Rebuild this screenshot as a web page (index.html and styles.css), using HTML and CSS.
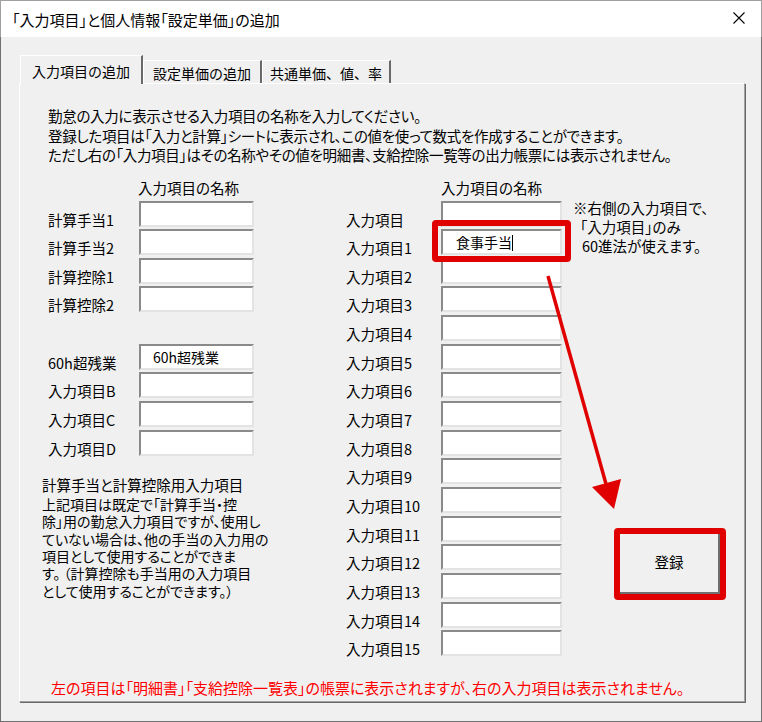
FILE: index.html
```html
<!DOCTYPE html>
<html lang="ja">
<head>
<meta charset="UTF-8">
<title>「入力項目」と個人情報「設定単価」の追加</title>
<link rel="stylesheet" href="styles.css">
</head>
<body>

<div class="window">
  <!-- タイトルバー -->
  <div class="titlebar">
    <span class="title">「入力項目」と個人情報「設定単価」の追加</span>
    <svg class="close" width="12" height="12" viewBox="0 0 12 12">
      <path d="M0.5 0.5 L11.5 11.5 M11.5 0.5 L0.5 11.5" stroke="#000" stroke-width="1.1" fill="none"/>
    </svg>
  </div>

  <div class="client">
    <div class="tabs">
      <div class="tab active">入力項目の追加</div>
      <div class="tab">設定単価の追加</div>
      <div class="tab wide">共通単価、値、率</div>
    </div>

    <div class="panel">
      <div class="intro">
        <p>勤怠の入力に表示させる入力項目の名称を入力してください。</p>
        <p>登録した項目は「入力と計算」シートに表示され、この値を使って数式を作成することができます。</p>
        <p>ただし右の「入力項目」はその名称やその値を明細書、支給控除一覧等の出力帳票には表示されません。</p>
      </div>

      <div class="form">
        <!-- 左側 -->
        <div class="col-left">
          <div class="col-head">入力項目の名称</div>
          <div class="row"><span class="lbl">計算手当1</span><div class="box"></div></div>
          <div class="row"><span class="lbl">計算手当2</span><div class="box"></div></div>
          <div class="row"><span class="lbl">計算控除1</span><div class="box"></div></div>
          <div class="row"><span class="lbl">計算控除2</span><div class="box"></div></div>
          <div class="row-gap"></div>
          <div class="row"><span class="lbl">60h超残業</span><div class="box">60h超残業</div></div>
          <div class="row"><span class="lbl">入力項目B</span><div class="box"></div></div>
          <div class="row"><span class="lbl">入力項目C</span><div class="box"></div></div>
          <div class="row"><span class="lbl">入力項目D</span><div class="box"></div></div>

          <div class="desc">
            <div class="desc-title">計算手当と計算控除用入力項目</div>
            <div class="desc-body">
              <div class="ln">上記項目は既定で「計算手当・控</div>
              <div class="ln">除」用の勤怠入力項目ですが、使用し</div>
              <div class="ln">ていない場合は、他の手当の入力用の</div>
              <div class="ln">項目として使用することができま</div>
              <div class="ln">す。 （計算控除も手当用の入力項目</div>
              <div class="ln">として使用することができます。）</div>
            </div>
          </div>
        </div>

        <!-- 右側 -->
        <div class="col-right">
          <div class="col-head">入力項目の名称</div>
          <div class="row"><span class="lbl">入力項目</span><div class="box"></div></div>
          <div class="row"><span class="lbl">入力項目1</span><div class="box marked">食事手当<span class="caret"></span></div></div>
          <div class="row"><span class="lbl">入力項目2</span><div class="box"></div></div>
          <div class="row"><span class="lbl">入力項目3</span><div class="box"></div></div>
          <div class="row"><span class="lbl">入力項目4</span><div class="box"></div></div>
          <div class="row"><span class="lbl">入力項目5</span><div class="box"></div></div>
          <div class="row"><span class="lbl">入力項目6</span><div class="box"></div></div>
          <div class="row"><span class="lbl">入力項目7</span><div class="box"></div></div>
          <div class="row"><span class="lbl">入力項目8</span><div class="box"></div></div>
          <div class="row"><span class="lbl">入力項目9</span><div class="box"></div></div>
          <div class="row"><span class="lbl">入力項目10</span><div class="box"></div></div>
          <div class="row"><span class="lbl">入力項目11</span><div class="box"></div></div>
          <div class="row"><span class="lbl">入力項目12</span><div class="box"></div></div>
          <div class="row"><span class="lbl">入力項目13</span><div class="box"></div></div>
          <div class="row"><span class="lbl">入力項目14</span><div class="box"></div></div>
          <div class="row"><span class="lbl">入力項目15</span><div class="box"></div></div>
        </div>

        <div class="col-side">
          <div class="note">
            <div>※右側の入力項目で、</div>
            <div class="indent">「入力項目」のみ</div>
            <div class="indent2">60進法が使えます。</div>
          </div>
          <div class="btn-frame"><div class="btn">登録</div></div>
        </div>
      </div>

      <p class="footnote">左の項目は「明細書」「支給控除一覧表」の帳票に表示されますが、右の入力項目は表示されません。</p>
    </div>
  </div>

  <!-- 赤い矢印（注記） -->
  <svg class="arrow" width="762" height="722" viewBox="0 0 762 722">
    <line x1="548" y1="276" x2="606" y2="484" stroke="#e00000" stroke-width="3.5"/>
    <polygon points="614,509 621,479 592,487" fill="#e00000"/>
  </svg>
</div>

</body>
</html>
```

FILE: styles.css
```css
* {
  margin: 0;
  padding: 0;
  box-sizing: border-box;
}

body {
  background: #fff;
  font-family: "Noto Sans CJK JP", sans-serif;
  color: #000;
}

/* ウィンドウ */
.window {
  position: relative;
  width: 762px;
  height: 722px;
  background: #f0f0f0;
  box-shadow: inset 1px 0 #707070, inset -1px 0 #707070, inset 0 -1px #707070;
  font-size: 14.5px;
  font-feature-settings: "palt";
}

.titlebar {
  height: 37px;
  background: #fff;
  display: flex;
  align-items: center;
  justify-content: space-between;
  padding: 2px 16px 0 11px;
  border-top: 1px solid #a0a0a0;
  border-left: 1px solid #a0a0a0;
  border-right: 1px solid #a0a0a0;
}
.title {
  font-size: 15px;
  line-height: 20px;
}
.close {
  display: block;
  margin-top: -4px;
}

.client {
  padding: 18px 0 0 19px;
}

/* タブ */
.tabs {
  display: flex;
  align-items: flex-end;
  height: 28px;
  padding-left: 1px;
}
.tab {
  position: relative;
  height: 23px;
  width: 119px;
  text-align: center;
  font-size: 14px;
  line-height: 22px;
  padding-top: 1px;
  background: #f0f0f0;
  border-top: 1px solid #fff;
  border-left: 1px solid #fff;
  border-right: 2px solid #696969;
  font-feature-settings: normal;
}
.tab.wide {
  width: 129px;
}
.tab.active {
  width: 123px;
  height: 29px;
  margin-bottom: -1px;
  padding-top: 4px;
  z-index: 1;
}

/* パネル */
.panel {
  width: 726px;
  height: 619px;
  border: 1px solid;
  border-color: #fff #a0a0a0 #a0a0a0 #fff;
  box-shadow: 1px 1px 0 #696969;
  padding: 22px 0 0 28px;
}

.intro p {
  line-height: 19.5px;
  letter-spacing: -0.3px;
  white-space: nowrap;
}

.form {
  display: flex;
  margin-top: 13px;
}

.col-head {
  height: 20px;
  line-height: 20px;
  margin-bottom: 3px;
}
.col-left {
  width: 298px;
}
.col-left .col-head {
  padding-left: 90px;
}
.col-right {
  width: 216px;
}
.col-right .col-head {
  padding-left: 95px;
}

.row {
  display: flex;
  height: 28.67px;
}
.lbl {
  width: 91px;
  padding-top: 9px;
  line-height: 20px;
  white-space: nowrap;
}
.col-right .lbl {
  width: 95px;
}
.row-gap {
  height: 28.67px;
}

/* テキストボックス */
.box {
  position: relative;
  width: 115px;
  height: 26px;
  background: #fff;
  border: 2px solid;
  border-color: #8a8a8a #e3e3e3 #e3e3e3 #8a8a8a;
  padding-left: 12px;
  line-height: 22px;
  font-size: 14px;
}
.col-right .box {
  width: 121px;
}
.box.marked {
  padding-left: 13px;
  z-index: 1;
}
.box.marked::after {
  content: "";
  position: absolute;
  left: -11px;
  right: -11px;
  top: -11px;
  bottom: -9px;
  border: 6px solid #e00000;
  border-radius: 4px;
}
.caret {
  display: inline-block;
  width: 1px;
  height: 16px;
  background: #000;
  vertical-align: -3px;
}

/* 左下の説明 */
.desc {
  margin: 16.5px 0 0 -6px;
}
.desc-title {
  line-height: 20px;
}
.desc-body {
  margin-top: 1px;
  font-size: 14px;
}
.desc-body .ln {
  height: 17.4px;
  line-height: 17.4px;
  white-space: nowrap;
}

/* 右側の注記と登録ボタン */
.col-side {
  margin-left: 11px;
}
.note {
  padding-top: 20px;
  line-height: 19px;
  white-space: nowrap;
}
.note .indent {
  padding-left: 7px;
}
.note .indent2 {
  padding-left: 9px;
}

.btn-frame {
  width: 112px;
  height: 72px;
  margin: 273px 0 0 41px;
  border: 6px solid #e00000;
  border-radius: 4px;
}
.btn {
  height: 100%;
  display: flex;
  align-items: center;
  justify-content: center;
  padding-bottom: 2px;
  border-right: 2px solid #6f6f6f;
  border-bottom: 2px solid #6f6f6f;
  background: #f0f0f0;
}

.footnote {
  margin: 19px 0 0 3px;
  color: #ff0000;
  font-size: 15px;
  line-height: 20px;
  white-space: nowrap;
}

.arrow {
  position: absolute;
  left: 0;
  top: 0;
  pointer-events: none;
}
```
